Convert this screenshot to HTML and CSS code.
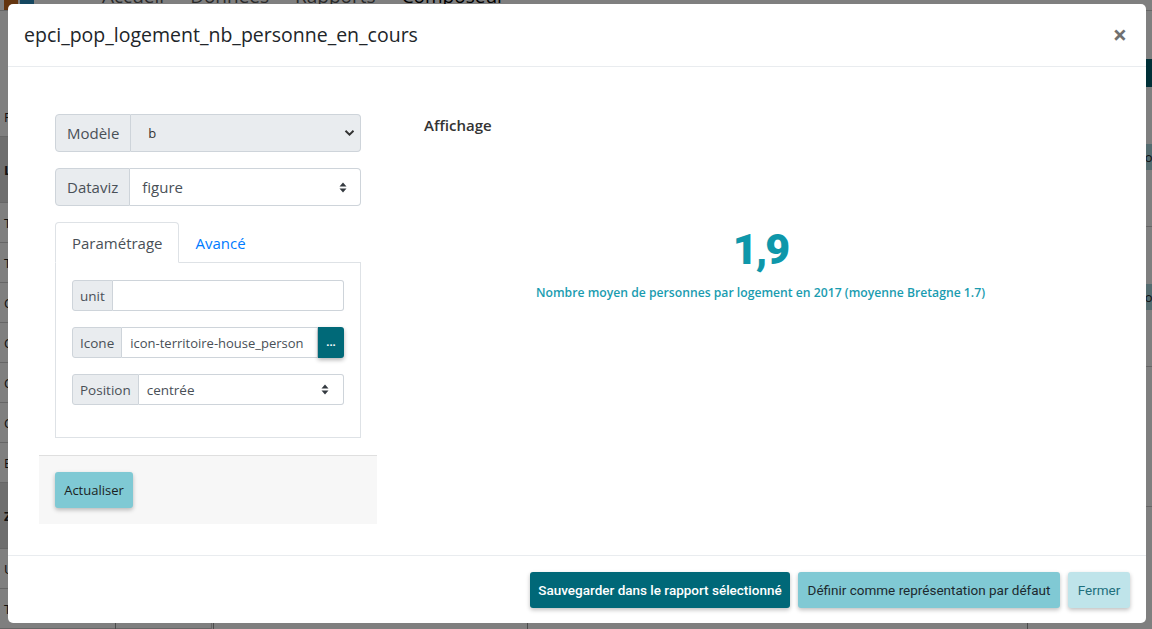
FILE: index.html
```html
<!DOCTYPE html>
<html lang="fr">
<head>
<meta charset="utf-8">
<title>Composeur</title>
<link rel="stylesheet" href="styles.css">
</head>
<body>
<div class="page">
  <header class="topnav">
    <div class="logo"><span class="logo-a"></span><span class="logo-b"></span></div>
    <nav class="links"><span>Accueil</span><span>Données</span><span>Rapports</span><span class="active">Composeur</span></nav>
  </header>
  <div class="layout">
    <aside class="sidebar">
      <div class="srow">Paramètres</div>
      <div class="srow head">Liste</div>
      <div class="srow">Texte</div>
      <div class="srow">Titre</div>
      <div class="srow">Chiffre clé</div>
      <div class="srow">Chiffre clé</div>
      <div class="srow">Chiffre clé</div>
      <div class="srow">Chiffre clé</div>
      <div class="srow">Encadré</div>
      <div class="srow head">Zone</div>
      <div class="srow">Unité</div>
      <div class="srow">Tableau</div>
    </aside>
    <main class="main">
      <div class="mainbar"></div>
      <div class="mrow"><span class="pill">Modifier</span></div>
      <div class="mrow"><span class="pill">Modifier</span></div>
      <div class="mrow"></div>
    </main>
  </div>
  <div class="bottomcols"><span></span><span></span><span></span><span></span></div>
</div>
<div class="backdrop"></div>

<div class="modal">
  <div class="modal-header">
    <h5 class="modal-title">epci_pop_logement_nb_personne_en_cours</h5>
    <span class="close">×</span>
  </div>

  <div class="modal-body">
    <div class="left-col">
      <div class="card-body">
        <div class="ig">
          <span class="ig-label">Modèle</span>
          <div class="select disabled">
            <span class="val small">b</span>
            <svg class="chev" width="11" height="8" viewBox="0 0 11 8"><path d="M1.5 1.8 L5.5 5.6 L9.5 1.8" fill="none" stroke="#333" stroke-width="2"/></svg>
          </div>
        </div>
        <div class="ig">
          <span class="ig-label">Dataviz</span>
          <div class="select">
            <span class="val">figure</span>
            <svg class="updown" width="8" height="11" viewBox="0 0 8 11"><path d="M4 0.5 L7.5 4.5 H0.5 Z M4 10.5 L7.5 6.5 H0.5 Z" fill="#343a40"/></svg>
          </div>
        </div>

        <div class="tabs">
          <span class="tab active">Paramétrage</span>
          <span class="tab">Avancé</span>
        </div>
        <div class="tab-pane">
          <div class="ig sm">
            <span class="ig-label">unit</span>
            <div class="input"></div>
          </div>
          <div class="ig sm">
            <span class="ig-label">Icone</span>
            <div class="input icon-input"><span class="val">icon-territoire-house_person</span></div>
            <span class="btn-dots">...</span>
          </div>
          <div class="ig sm">
            <span class="ig-label">Position</span>
            <div class="select">
              <span class="val">centrée</span>
              <svg class="updown" width="8" height="11" viewBox="0 0 8 11"><path d="M4 0.5 L7.5 4.5 H0.5 Z M4 10.5 L7.5 6.5 H0.5 Z" fill="#343a40"/></svg>
            </div>
          </div>
        </div>
      </div>
      <div class="card-footer">
        <span class="btn btn-actualiser">Actualiser</span>
      </div>
    </div>

    <div class="right-col">
      <h6 class="affichage">Affichage</h6>
      <div class="figure">
        <div class="fig-value">1,9</div>
        <div class="fig-label">Nombre moyen de personnes par logement en 2017 (moyenne Bretagne 1.7)</div>
      </div>
    </div>
  </div>

  <div class="modal-footer">
    <span class="btn btn-save">Sauvegarder dans le rapport sélectionné</span>
    <span class="btn btn-default">Définir comme représentation par défaut</span>
    <span class="btn btn-close">Fermer</span>
  </div>
</div>
</body>
</html>
```

FILE: styles.css
```css
* { box-sizing: border-box; }

html, body {
  margin: 0;
  padding: 0;
  width: 1152px;
  height: 629px;
  overflow: hidden;
}

body {
  font-family: "Open Sans", "Noto Sans", sans-serif;
  color: #212529;
  background: #fff;
  position: relative;
}

/* ---------- background page ---------- */
.page {
  width: 1152px;
  height: 629px;
  background: #fff;
  display: flex;
  flex-direction: column;
}

.topnav {
  height: 12px;
  display: flex;
  align-items: flex-end;
  border-bottom: 1px solid #ccc;
  overflow: hidden;
}

.logo {
  display: flex;
  gap: 2px;
  width: 90px;
  padding-left: 4px;
  height: 12px;
}
.logo-a { width: 14px; height: 12px; background: #c86a1f; }
.logo-b { width: 14px; height: 12px; background: #2b8fc0; }

.links {
  display: flex;
  gap: 26px;
  padding-left: 12px;
  font-size: 19px;
  line-height: 20px;
  color: #555;
  margin-bottom: 4px;
  margin-top: -10px;
}
.links .active { color: #000; }

.layout {
  flex: 1;
  display: flex;
}

.sidebar {
  width: 212px;
  border-right: 1px solid #ccc;
  padding-top: 86px;
  font-size: 13px;
}
.srow {
  height: 40px;
  line-height: 40px;
  padding-left: 4px;
  border-bottom: 1px solid #ccc;
  color: #222;
}
.srow.head {
  background: #ddd;
  font-weight: 700;
  height: 66px;
  line-height: 66px;
}

.main {
  flex: 1;
  padding-top: 48px;
}
.mainbar {
  height: 28px;
  background: #00606e;
}
.mrow {
  height: 140px;
  border-bottom: 1px solid #ccc;
  display: flex;
  justify-content: flex-end;
  align-items: center;
}
.pill {
  background: #a9d8e0;
  font-size: 13px;
  padding: 4px 8px;
  margin-right: -40px;
}

.bottomcols {
  position: absolute;
  bottom: 0;
  left: 0;
  right: 0;
  height: 8px;
  display: flex;
}
.bottomcols span { border-left: 1px solid #999; }
.bottomcols span:nth-child(1) { margin-left: 115px; width: 98px; }
.bottomcols span:nth-child(2) { width: 314px; }
.bottomcols span:nth-child(3) { width: 500px; }
.bottomcols span:nth-child(4) { width: 100px; }

.backdrop {
  position: absolute;
  inset: 0;
  background: rgba(0, 0, 0, 0.5);
}

/* ---------- modal ---------- */
.modal {
  position: absolute;
  left: 8px;
  top: 4px;
  width: 1138px;
  height: 619px;
  background: #fff;
  border-radius: 5px;
  display: flex;
  flex-direction: column;
}

.modal-header {
  height: 63px;
  padding: 0 16px;
  border-bottom: 1px solid #e9ecef;
  display: flex;
  align-items: center;
  justify-content: space-between;
}

.modal-title {
  margin: 0;
  font-size: 19.5px;
  font-weight: 400;
  line-height: 30px;
  color: #212529;
}

.close {
  font-size: 25px;
  font-weight: 700;
  color: #707070;
  line-height: 1;
  margin-right: 3px;
  margin-top: -1px;
}

.modal-body {
  height: 488px;
  padding: 31px 31px 0 31px;
  display: flex;
  gap: 47px;
}

.left-col {
  width: 338px;
  height: 425px;
  display: flex;
  flex-direction: column;
}

.card-body {
  padding: 16px 16px 17px 16px;
  display: flex;
  flex-direction: column;
}

.ig {
  display: flex;
  height: 38px;
  margin-bottom: 16px;
  font-size: 15px;
}

.ig-label {
  display: flex;
  align-items: center;
  padding: 0 11px;
  background: #e9ecef;
  border: 1px solid #ced4da;
  border-radius: 4px 0 0 4px;
  color: #495057;
  white-space: nowrap;
}

.select, .input {
  flex: 1;
  min-width: 0;
  display: flex;
  align-items: center;
  justify-content: space-between;
  border: 1px solid #ced4da;
  border-left: none;
  border-radius: 0 4px 4px 0;
  padding: 0 12px;
  color: #495057;
  background: #fff;
  white-space: nowrap;
  overflow: hidden;
}
.select.disabled {
  background: #e9ecef;
  padding-left: 17px;
  padding-right: 5px;
}
.val.small { font-size: 13px; color: #333; }

.updown { margin-right: 1px; flex: none; }

.tabs {
  display: flex;
  height: 41px;
  border-bottom: 1px solid #dee2e6;
}
.tab {
  display: flex;
  align-items: center;
  padding: 0 16px 0 16px;
  font-size: 15px;
  color: #007bff;
  border: 1px solid transparent;
  border-radius: 4px 4px 0 0;
  margin-bottom: -1px;
}
.tab.active {
  color: #495057;
  background: #fff;
  border-color: #dee2e6 #dee2e6 #fff;
  padding-right: 15px;
}

.tab-pane {
  border: 1px solid #dee2e6;
  border-top: none;
  height: 175px;
  padding: 17px 16px 0 16px;
}

.ig.sm {
  height: 31px;
  margin-bottom: 16px;
  font-size: 13.5px;
}
.ig.sm .ig-label {
  padding: 0 7px;
  border-radius: 3px 0 0 3px;
}
.ig.sm .select, .ig.sm .input {
  padding: 0 8px;
  border-radius: 0 3px 3px 0;
}
.ig.sm .select { padding-right: 13px; }
.ig.sm .icon-input {
  border-radius: 0;
  font-size: 13px;
  justify-content: flex-start;
}

.btn-dots {
  width: 26px;
  flex: none;
  background: #006978;
  color: #fff;
  font-weight: 700;
  font-size: 11px;
  display: flex;
  align-items: center;
  justify-content: center;
  border-radius: 0 3px 3px 0;
  box-shadow: 0 2px 4px rgba(0, 0, 0, 0.3);
  padding-bottom: 2px;
}

.card-footer {
  flex: 1;
  background: #f7f7f7;
  border-top: 1px solid #dfdfdf;
  padding: 16px;
}

.btn {
  display: inline-flex;
  align-items: center;
  justify-content: center;
  height: 36px;
  border-radius: 3px;
  font-family: Roboto, "Open Sans", sans-serif;
  font-size: 13.5px;
  box-shadow: 0 2px 4px rgba(0, 0, 0, 0.25);
  white-space: nowrap;
}

.btn-actualiser {
  width: 78px;
  background: #7fc9d4;
  color: #1b1f22;
  font-family: "Open Sans", sans-serif;
  font-size: 13px;
}

.right-col {
  flex: 1;
  padding-top: 15px;
}

.affichage {
  margin: 0;
  font-size: 15px;
  font-weight: 600;
  line-height: 24px;
  color: #333;
}

.figure {
  margin-top: 86px;
  display: flex;
  flex-direction: column;
  align-items: center;
  padding-right: 18px;
}

.fig-value {
  font-family: Roboto, sans-serif;
  font-weight: 900;
  font-size: 43px;
  line-height: 52px;
  letter-spacing: -2px;
  color: #0e97aa;
}

.fig-label {
  margin-top: 9px;
  font-size: 12.2px;
  font-weight: 600;
  color: #1a9cb0;
  white-space: nowrap;
}

.modal-footer {
  flex: 1;
  border-top: 1px solid #e9ecef;
  display: flex;
  justify-content: flex-end;
  align-items: flex-start;
  padding: 16px 16px 0 16px;
  gap: 8px;
}

.btn-save {
  width: 260px;
  background: #006878;
  color: #fff;
  font-weight: 500;
}
.btn-default {
  width: 262px;
  background: #80c9d4;
  color: #1d2a2f;
}
.btn-close {
  width: 62px;
  background: #bfe4ea;
  color: #1e6f7c;
}
```
